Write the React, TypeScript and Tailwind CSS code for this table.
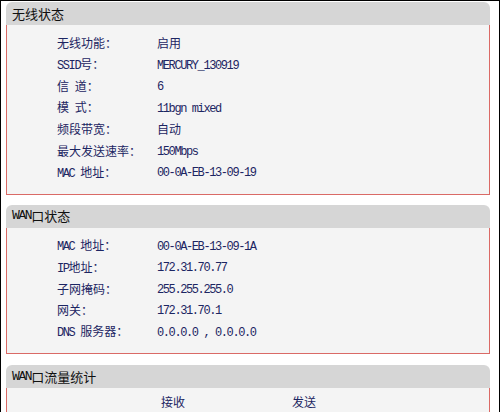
import type { ReactNode } from "react";

const CJK = "font-['Noto_Sans_CJK_SC',sans-serif]";
const MONO = "font-['Liberation_Mono','Noto_Sans_CJK_SC',monospace] tracking-[-1.4px]";

/** Split text so ASCII runs use the narrow mono face and CJK runs the CJK face. */
function Mixed({ text }: { text: string }) {
  const parts = text.match(/[\x20-\x7e]+|[^\x20-\x7e]+/g) ?? [];
  return (
    <>
      {parts.map((part, i) =>
        /^[\x20-\x7e]+$/.test(part) ? (
          <span key={i} className={`${MONO} whitespace-pre`}>
            {part}
          </span>
        ) : (
          <span key={i} className={CJK}>
            {part}
          </span>
        )
      )}
    </>
  );
}

interface PanelProps {
  title: string;
  children: ReactNode;
  className?: string;
  bodyClassName?: string;
}

function Panel({ title, children, className = "", bodyClassName = "pb-[10px] pt-2" }: PanelProps) {
  return (
    <section className={`ml-[5px] w-[484px] ${className}`}>
      <div className="flex h-[23px] items-center rounded-t-[6px] bg-[#d6d6d6] pl-[6px] text-[13px] text-[#111]">
        <Mixed text={title} />
      </div>
      <div className={`border-x border-b border-[#da6a66] bg-[#f4f4f4] ${bodyClassName}`}>{children}</div>
    </section>
  );
}

function Row({ label, value }: { label: string; value: string }) {
  return (
    <div className="flex h-[21.5px] items-center pl-[50px] text-[12px] text-[#1c2562]">
      <div className="w-[100px]">
        <Mixed text={label} />
      </div>
      <div>
        <Mixed text={value} />
      </div>
    </div>
  );
}

const wireless = [
  ["无线功能：", "启用"],
  ["SSID号：", "MERCURY_130919"],
  ["信 道：", "6"],
  ["模 式：", "11bgn mixed"],
  ["频段带宽：", "自动"],
  ["最大发送速率：", "150Mbps"],
  ["MAC 地址：", "00-0A-EB-13-09-19"],
];

const wan = [
  ["MAC 地址：", "00-0A-EB-13-09-1A"],
  ["IP地址：", "172.31.70.77"],
  ["子网掩码：", "255.255.255.0"],
  ["网关：", "172.31.70.1"],
  ["DNS 服务器：", "0.0.0.0 , 0.0.0.0"],
];

export default function App() {
  return (
    <div className="h-[412px] w-[500px] overflow-hidden border-x border-t border-black bg-white">
      <Panel title="无线状态" className="mt-[1px]">
        {wireless.map(([l, v]) => (
          <Row key={l} label={l} value={v} />
        ))}
      </Panel>

      <Panel title="WAN口状态" className="mt-[10px]">
        {wan.map(([l, v]) => (
          <Row key={l} label={l} value={v} />
        ))}
      </Panel>

      <Panel title="WAN口流量统计" className="mt-[11px]" bodyClassName="pt-[5px] pb-[24px]">
        <div className={`flex h-[18px] items-center pl-[154px] text-[12px] text-[#1c2562] ${CJK}`}>
          <span className="w-[131px]">接收</span>
          <span>发送</span>
        </div>
      </Panel>
    </div>
  );
}
